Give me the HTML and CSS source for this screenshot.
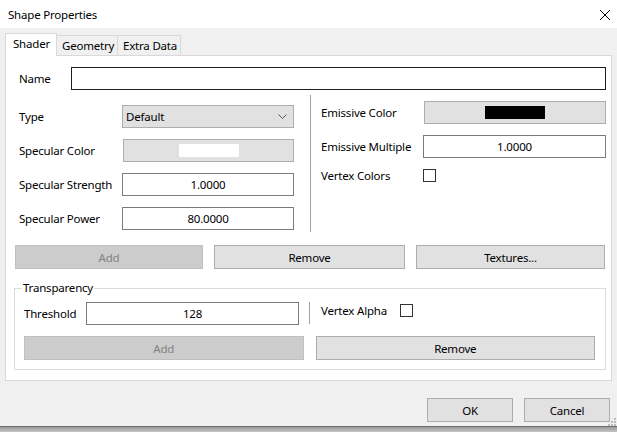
FILE: index.html
```html
<!DOCTYPE html>
<html>
    <head>
        <link rel="stylesheet" href="styles.css">
    </head>
    <body>
        <div class="titlebar">
            <span class="title">Shape Properties</span>
            <svg class="close" width="12" height="12" viewBox="0 0 12 12">
                <path d="M1 1 L11 11 M11 1 L1 11" stroke="#000" stroke-width="1" fill="none"/>
            </svg>
        </div>

        <div class="dialog">
            <div class="tabs">
                <div class="tab selected">Shader</div>
                <div class="tab geometry">Geometry</div>
                <div class="tab extra">Extra Data</div>
            </div>

            <div class="panel">
                <div class="row name-row">
                    <label class="name-label">Name</label>
                    <div class="input name-input"></div>
                </div>

                <div class="columns">
                    <div class="col left">
                        <div class="row field">
                            <label class="lbl">Type</label>
                            <div class="combo">
                                <span>Default</span>
                                <svg width="9" height="6" viewBox="0 0 9 6">
                                    <path d="M0.5 0.5 L4.5 4.5 L8.5 0.5" stroke="#555" fill="none"/>
                                </svg>
                            </div>
                        </div>
                        <div class="row field">
                            <label class="lbl">Specular Color</label>
                            <div class="btn color-btn"><span class="swatch white"></span></div>
                        </div>
                        <div class="row field">
                            <label class="lbl">Specular Strength</label>
                            <div class="input num">1.0000</div>
                        </div>
                        <div class="row field">
                            <label class="lbl">Specular Power</label>
                            <div class="input num">80.0000</div>
                        </div>
                    </div>
                    <div class="vsep"></div>
                    <div class="col right">
                        <div class="row field">
                            <label class="lbl">Emissive Color</label>
                            <div class="btn color-btn"><span class="swatch black"></span></div>
                        </div>
                        <div class="row field">
                            <label class="lbl">Emissive Multiple</label>
                            <div class="input num">1.0000</div>
                        </div>
                        <div class="row check-row">
                            <label class="lbl">Vertex Colors</label>
                            <span class="checkbox"></span>
                        </div>
                    </div>
                </div>

                <div class="btn-row three">
                    <div class="btn disabled">Add</div>
                    <div class="btn">Remove</div>
                    <div class="btn">Textures...</div>
                </div>

                <fieldset class="group">
                    <legend>Transparency</legend>
                    <div class="row thresh-row">
                        <label class="thresh-label">Threshold</label>
                        <div class="input num thresh-input">128</div>
                        <div class="vsep short"></div>
                        <div class="alpha">
                            <label>Vertex Alpha</label>
                            <span class="checkbox"></span>
                        </div>
                    </div>
                    <div class="btn-row two">
                        <div class="btn disabled">Add</div>
                        <div class="btn">Remove</div>
                    </div>
                </fieldset>
            </div>

            <div class="footer">
                <div class="btn footer-btn">OK</div>
                <div class="btn footer-btn">Cancel</div>
            </div>
        </div>

        <div class="taskbar"></div>
        <svg class="grip" width="8" height="8" viewBox="0 0 8 8">
            <rect x="6" y="0" width="2" height="2" fill="#bcbcbc"/>
            <rect x="3" y="3" width="2" height="2" fill="#bcbcbc"/>
            <rect x="6" y="3" width="2" height="2" fill="#bcbcbc"/>
            <rect x="0" y="6" width="2" height="2" fill="#bcbcbc"/>
            <rect x="3" y="6" width="2" height="2" fill="#bcbcbc"/>
            <rect x="6" y="6" width="2" height="2" fill="#bcbcbc"/>
        </svg>
    </body>
</html>
```

FILE: styles.css
```css
html, body {
    margin: 0;
    height: 432px;
    overflow: hidden;
}
body {
    background-color: #f0f0f0;
    font-family: "Noto Sans", "DejaVu Sans", sans-serif;
    font-size: 11.5px;
    letter-spacing: -0.2px;
    color: #000;
    display: flex;
    flex-direction: column;
    position: relative;
}

/* title bar */
.titlebar {
    height: 28px;
    background-color: #fff;
    display: flex;
    align-items: center;
    justify-content: space-between;
    padding: 0 6px 0 8px;
}
.close {
    margin-top: 1px;
}

.dialog {
    padding: 5px 5px 0 5px;
}

/* tabs */
.tabs {
    display: flex;
    align-items: flex-end;
    height: 22px;
}
.tab {
    height: 20px;
    line-height: 19px;
    border: 1px solid #d9d9d9;
    border-bottom: none;
    border-left: none;
    box-sizing: border-box;
    padding-left: 5px;
}
.tab.selected {
    width: 52px;
    height: 23px;
    margin-bottom: -1px;
    background-color: #fff;
    border-left: 1px solid #d9d9d9;
    padding-left: 7px;
    line-height: 20px;
    position: relative;
    z-index: 1;
}
.tab.geometry {
    width: 61px;
}
.tab.extra {
    width: 63px;
}

.panel {
    background-color: #fff;
    border: 1px solid #d9d9d9;
    padding: 11px 5px 10px 9px;
}

.row {
    display: flex;
    align-items: center;
}

/* generic controls */
.input {
    height: 23px;
    box-sizing: border-box;
    border: 1px solid #7a7a7a;
    background-color: #fff;
}
.num {
    display: flex;
    align-items: center;
    justify-content: center;
}
.btn {
    height: 24px;
    box-sizing: border-box;
    border: 1px solid #adadad;
    background-color: #e1e1e1;
    display: flex;
    align-items: center;
    justify-content: center;
}
.btn.disabled {
    background-color: #cccccc;
    border-color: #bfbfbf;
    color: #838383;
}
.checkbox {
    width: 13px;
    height: 13px;
    box-sizing: border-box;
    border: 1px solid #333;
    background-color: #fff;
}

/* name */
.name-row {
    height: 23px;
}
.name-label {
    width: 52px;
    padding-left: 4px;
}
.name-input {
    flex: 1;
    border-color: #1e1e1e;
}

/* two columns */
.columns {
    display: flex;
    margin-top: 5px;
    height: 137px;
}
.col.left {
    width: 275px;
    margin-left: 4px;
    padding-top: 10px;
    display: flex;
    flex-direction: column;
    gap: 11px;
}
.col.right {
    flex: 1;
    padding-top: 6px;
    display: flex;
    flex-direction: column;
    gap: 11px;
}
.vsep {
    width: 1px;
    background-color: #a0a0a0;
    margin: 0 10px 0 16px;
}
.field {
    height: 23px;
}
.lbl {
    width: 103px;
    flex-shrink: 0;
}
.col.right .lbl {
    width: 102px;
}
.field .input, .field .btn, .combo {
    flex: 1;
}
.combo {
    height: 23px;
    box-sizing: border-box;
    border: 1px solid #adadad;
    background-color: #e1e1e1;
    display: flex;
    align-items: center;
    justify-content: space-between;
    padding: 0 6px 0 3px;
}
.color-btn {
    height: 23px;
    margin-left: 1px;
}
.swatch {
    width: 60px;
    height: 13px;
}
.swatch.white {
    background-color: #fff;
}
.swatch.black {
    background-color: #000;
}
.check-row {
    height: 13px;
}

/* button rows */
.btn-row {
    display: grid;
}
.btn-row.three {
    margin-top: 13px;
    margin-right: 1px;
    grid-template-columns: 188px 191px 189px;
    justify-content: space-between;
}
.btn-row.two {
    margin-top: 11px;
    grid-template-columns: 1fr 1fr;
    column-gap: 12px;
}

/* transparency group */
.group {
    margin: 11px 0 0 -1px;
    border: 1px solid #dcdcdc;
    padding: 6px 10px 9px 9px;
    min-width: 0;
}
.group legend {
    padding: 0 1px;
    margin-left: -2px;
    line-height: 16px;
}
.thresh-row {
    height: 23px;
    align-items: flex-start;
}
.thresh-label {
    width: 62px;
    line-height: 23px;
}
.thresh-input {
    width: 213px;
}
.vsep.short {
    height: 22px;
    margin: 0 11px 0 10px;
}
.alpha {
    display: flex;
    align-items: center;
    gap: 13px;
    height: 17px;
}

/* footer */
.footer {
    display: flex;
    justify-content: flex-end;
    gap: 11px;
    margin-top: 17px;
    padding-right: 2px;
}
.footer-btn {
    width: 86px;
}

.taskbar {
    margin-top: auto;
    height: 5px;
    border-top: 1px solid #6f6f6f;
    background: linear-gradient(#9a9a9a, #c4c4c4);
}
.grip {
    position: absolute;
    right: 1px;
    bottom: 6px;
}
```
